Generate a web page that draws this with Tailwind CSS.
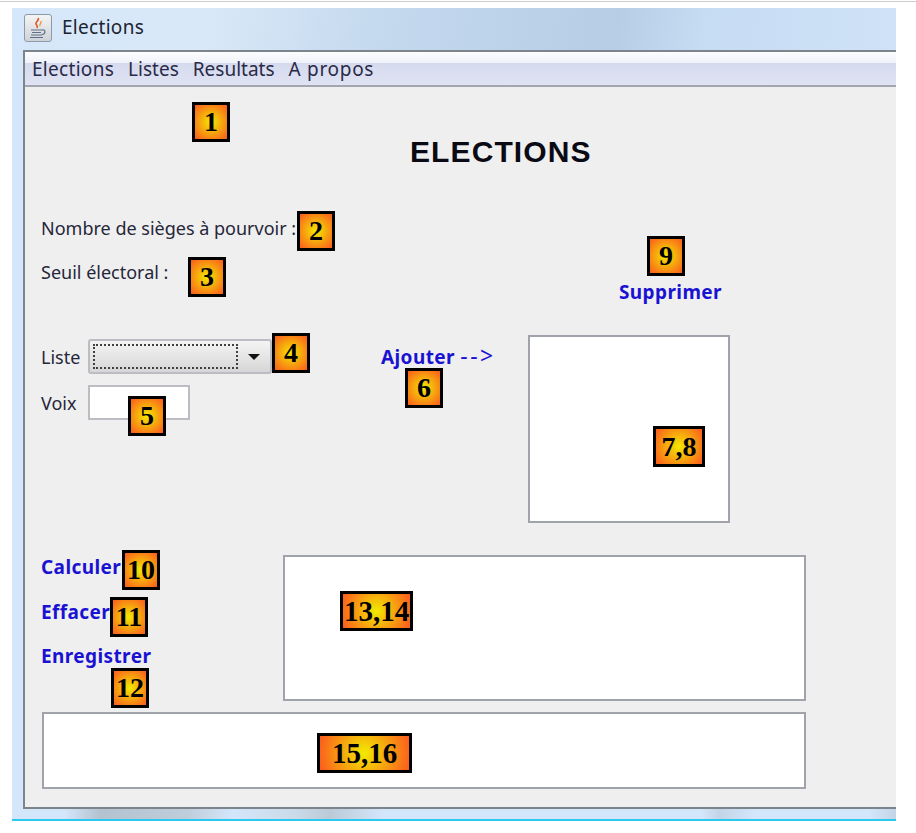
<!DOCTYPE html>
<html lang="fr">
<head>
<meta charset="utf-8">
<title>Elections</title>
<script src="https://cdn.jsdelivr.net/npm/@tailwindcss/browser@4"></script>
</head>
<body class="bg-white font-['Noto_Sans',sans-serif] text-[#26263a] overflow-hidden">
<div class="w-[916px] h-[833px] relative">
  <div class="h-[8px] pt-[1px]"><div class="h-[1px] bg-[#cccccc]"></div></div>
  <div class="ml-[12px] w-[884px] h-[813px] flex flex-col bg-[#d3e6fa] relative">
    <!-- title bar -->
    <div class="h-[42px] shrink-0 flex items-center gap-[10px] pl-[12px] pb-[3px] bg-[linear-gradient(100deg,#d5e7fa_0%,#d9e8f8_22%,#c4d9ee_42%,#b6cde5_68%,#c6dcf3_78%,#cfe2f7_100%)]">
      <div class="w-[28px] h-[28px] rounded-[3px] border border-[#8c9aa8] bg-[linear-gradient(#f4f4f4,#cfd3d8)] flex items-center justify-center">
        <svg width="20" height="22" viewBox="0 0 20 22" fill="none">
          <path d="M10 1c2 2-3 4-2 6s2 2 1 4" stroke="#e2551f" stroke-width="1.6"/>
          <path d="M13 4c1 2-2 3-1 5" stroke="#e88a3a" stroke-width="1.2"/>
          <path d="M3 13h11M4 15.500h9M3 18h11M2 20.500h13" stroke="#5f6f8a" stroke-width="1.1"/>
          <path d="M14 13c4-1 4 4 0 4.500" stroke="#5f6f8a" stroke-width="1.1"/>
        </svg>
      </div>
      <span class="text-[19px] leading-none tracking-[0.3px] text-[#1c2430]">Elections</span>
    </div>
    <!-- client -->
    <div class="ml-[11px] flex-1 min-h-0 flex flex-col border-t-2 border-l-2 border-b-2 border-[#7e848c]">
      <!-- menu -->
      <div class="h-[35px] shrink-0 flex items-center gap-[14px] pl-[7px] pt-[2px] text-[19px] leading-none tracking-[0.3px] text-[#2a2a48] border-b-2 border-[#a3a6ad] bg-[linear-gradient(#fcfdfe_0%,#eff2fa_32%,#d5daee_33%,#dfe3f3_100%)]">
        <span>Elections</span><span class="tracking-normal">Listes</span><span class="tracking-normal">Resultats</span><span class="tracking-[0.7px]">A propos</span>
      </div>
      <!-- panel -->
      <div class="flex-1 min-h-0 relative bg-[#efefef] flex flex-col pl-[16px]">
        <h1 class="h-[125px] shrink-0 pt-[45px] pl-[369px] font-['Liberation_Sans',sans-serif] font-bold text-[30px] leading-[40px] text-[#0a0a14] tracking-[1.1px]">ELECTIONS</h1>

        <div class="h-[311px] shrink-0 flex">
          <div class="w-[340px] shrink-0 flex flex-col text-[18px] leading-[24px]">
            <div class="mt-[4px]">Nombre de sièges à pourvoir :</div>
            <div class="mt-[20px]">Seuil électoral :</div>
            <div class="mt-[55px] flex items-center gap-[11px] h-[35px]">
              <span class="w-[36px]">Liste</span>
              <div class="w-[184px] h-[35px] rounded-[3px] border-2 border-[#bcbcc2] bg-[linear-gradient(#f4f4f4,#d6d6d6)] flex items-center pl-[3px] pr-[10px] justify-between">
                <div class="w-[145px] h-[25px] border-2 border-dotted border-[#404040]"></div>
                <div class="w-0 h-0 border-x-[6px] border-x-transparent border-t-[6px] border-t-[#111]"></div>
              </div>
            </div>
            <div class="mt-[11px] flex items-center gap-[11px] h-[35px]">
              <span class="w-[36px]">Voix</span>
              <div class="w-[102px] h-[35px] bg-white border-2 border-[#bcbcc2]"></div>
            </div>
          </div>
          <div class="w-[147px] shrink-0 pt-[133px] text-[19px] leading-[24px] tracking-[0.4px] text-[#1a12d2] font-bold whitespace-nowrap">Ajouter <span class="font-normal text-[23px] leading-[20px] tracking-[2.5px]">--&gt;</span></div>
          <div class="w-[202px] shrink-0 flex flex-col">
            <div class="h-[123px] shrink-0 pt-[68px] pl-[91px] text-[19px] leading-[24px] tracking-[0.4px] text-[#1a12d2] font-bold whitespace-nowrap">Supprimer</div>
            <div class="h-[188px] bg-white border-2 border-[#a0a4aa]"></div>
          </div>
        </div>

        <div class="h-[146px] shrink-0 flex mt-[32px]">
          <div class="w-[242px] shrink-0 flex flex-col text-[19px] leading-[24px] tracking-[0.4px] text-[#1a12d2] font-bold">
            <div>Calculer</div>
            <div class="mt-[21px]">Effacer</div>
            <div class="mt-[20px]">Enregistrer</div>
          </div>
          <div class="w-[523px] h-[146px] bg-white border-2 border-[#a0a4aa]"></div>
        </div>

        <div class="mt-[11px] ml-[1px] w-[764px] h-[77px] bg-white border-2 border-[#a0a4aa]"></div>

        <!-- numbered badges over the form -->
        <div class="absolute left-[167px] top-[15px] w-[38px] h-[40px] border-[3px] border-black bg-[radial-gradient(circle,#f2ea00,#fb5a1e)] flex items-center justify-center font-['Liberation_Serif',serif] font-bold text-[28px] leading-none text-black">1</div>
        <div class="absolute left-[272px] top-[124px] w-[38px] h-[40px] border-[3px] border-black bg-[radial-gradient(circle,#f2ea00,#fb5a1e)] flex items-center justify-center font-['Liberation_Serif',serif] font-bold text-[28px] leading-none text-black">2</div>
        <div class="absolute left-[163px] top-[170px] w-[38px] h-[40px] border-[3px] border-black bg-[radial-gradient(circle,#f2ea00,#fb5a1e)] flex items-center justify-center font-['Liberation_Serif',serif] font-bold text-[28px] leading-none text-black">3</div>
        <div class="absolute left-[247px] top-[246px] w-[38px] h-[40px] border-[3px] border-black bg-[radial-gradient(circle,#f2ea00,#fb5a1e)] flex items-center justify-center font-['Liberation_Serif',serif] font-bold text-[28px] leading-none text-black">4</div>
        <div class="absolute left-[103px] top-[309px] w-[38px] h-[40px] border-[3px] border-black bg-[radial-gradient(circle,#f2ea00,#fb5a1e)] flex items-center justify-center font-['Liberation_Serif',serif] font-bold text-[28px] leading-none text-black">5</div>
        <div class="absolute left-[380px] top-[281px] w-[38px] h-[40px] border-[3px] border-black bg-[radial-gradient(circle,#f2ea00,#fb5a1e)] flex items-center justify-center font-['Liberation_Serif',serif] font-bold text-[28px] leading-none text-black">6</div>
        <div class="absolute left-[628px] top-[339px] w-[52px] h-[41px] border-[3px] border-black bg-[radial-gradient(circle,#f2ea00,#fb5a1e)] flex items-center justify-center font-['Liberation_Serif',serif] font-bold text-[28px] leading-none text-black">7,8</div>
        <div class="absolute left-[622px] top-[149px] w-[38px] h-[40px] border-[3px] border-black bg-[radial-gradient(circle,#f2ea00,#fb5a1e)] flex items-center justify-center font-['Liberation_Serif',serif] font-bold text-[28px] leading-none text-black">9</div>
        <div class="absolute left-[97px] top-[463px] w-[38px] h-[40px] border-[3px] border-black bg-[radial-gradient(circle,#f2ea00,#fb5a1e)] flex items-center justify-center font-['Liberation_Serif',serif] font-bold text-[28px] leading-none text-black">10</div>
        <div class="absolute left-[85px] top-[510px] w-[38px] h-[40px] border-[3px] border-black bg-[radial-gradient(circle,#f2ea00,#fb5a1e)] flex items-center justify-center font-['Liberation_Serif',serif] font-bold text-[28px] leading-none text-black">11</div>
        <div class="absolute left-[86px] top-[581px] w-[38px] h-[40px] border-[3px] border-black bg-[radial-gradient(circle,#f2ea00,#fb5a1e)] flex items-center justify-center font-['Liberation_Serif',serif] font-bold text-[28px] leading-none text-black">12</div>
        <div class="absolute left-[315px] top-[504px] w-[73px] h-[40px] border-[3px] border-black bg-[radial-gradient(circle,#f2ea00,#fb5a1e)] flex items-center justify-center font-['Liberation_Serif',serif] font-bold text-[29px] leading-none text-black">13,14</div>
        <div class="absolute left-[292px] top-[646px] w-[95px] h-[40px] border-[3px] border-black bg-[radial-gradient(circle,#f2ea00,#fb5a1e)] flex items-center justify-center font-['Liberation_Serif',serif] font-bold text-[29px] leading-none text-black">15,16</div>
      </div>
    </div>
    <!-- bottom frame -->
    <div class="h-[12px] shrink-0 border-b-2 border-b-[#2bc8f0] bg-[linear-gradient(90deg,#d3e6fa_0%,#d3e6fa_6%,#b4c2d0_10%,#c0cedc_20%,#d3e6fa_25%,#cbdae8_32%,#bccad8_36%,#d3e6fa_42%,#d3e6fa_78%,#c3d4e6_80%,#d3e6fa_84%,#d3e6fa_97%,#c3d4e6_100%)]"></div>
  </div>
</div>
</body>
</html>
